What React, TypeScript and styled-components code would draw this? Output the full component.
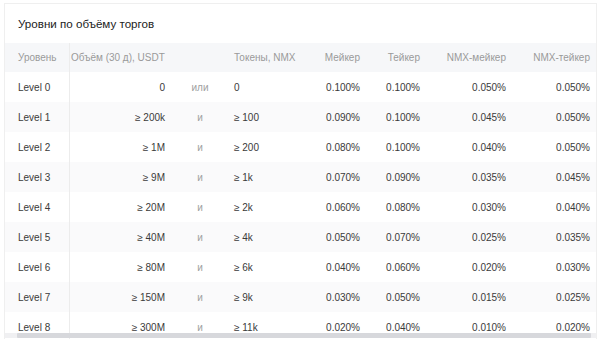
import styled, { createGlobalStyle } from "styled-components";

type Level = {
   name: string;
   volume: string;
   joint: string;
   tokens: string;
   maker: string;
   taker: string;
   nmxMaker: string;
   nmxTaker: string;
};

const levels: Level[] = [
   { name: "Level 0", volume: "0", joint: "или", tokens: "0", maker: "0.100%", taker: "0.100%", nmxMaker: "0.050%", nmxTaker: "0.050%" },
   { name: "Level 1", volume: "≥ 200k", joint: "и", tokens: "≥ 100", maker: "0.090%", taker: "0.100%", nmxMaker: "0.045%", nmxTaker: "0.050%" },
   { name: "Level 2", volume: "≥ 1M", joint: "и", tokens: "≥ 200", maker: "0.080%", taker: "0.100%", nmxMaker: "0.040%", nmxTaker: "0.050%" },
   { name: "Level 3", volume: "≥ 9M", joint: "и", tokens: "≥ 1k", maker: "0.070%", taker: "0.090%", nmxMaker: "0.035%", nmxTaker: "0.045%" },
   { name: "Level 4", volume: "≥ 20M", joint: "и", tokens: "≥ 2k", maker: "0.060%", taker: "0.080%", nmxMaker: "0.030%", nmxTaker: "0.040%" },
   { name: "Level 5", volume: "≥ 40M", joint: "и", tokens: "≥ 4k", maker: "0.050%", taker: "0.070%", nmxMaker: "0.025%", nmxTaker: "0.035%" },
   { name: "Level 6", volume: "≥ 80M", joint: "и", tokens: "≥ 6k", maker: "0.040%", taker: "0.060%", nmxMaker: "0.020%", nmxTaker: "0.030%" },
   { name: "Level 7", volume: "≥ 150M", joint: "и", tokens: "≥ 9k", maker: "0.030%", taker: "0.050%", nmxMaker: "0.015%", nmxTaker: "0.025%" },
   { name: "Level 8", volume: "≥ 300M", joint: "и", tokens: "≥ 11k", maker: "0.020%", taker: "0.040%", nmxMaker: "0.010%", nmxTaker: "0.020%" },
];

function App() {
   return (
      <>
         <GlobalStyle />
         <Card>
            <Title>Уровни по объёму торгов</Title>
            <TableScroll>
               <HeaderRow>
                  <LevelCell>Уровень</LevelCell>
                  <Cell $align="left" $pad="0 0 0 1px">Объём (30 д), USDT</Cell>
                  <Cell $align="center" />
                  <Cell $align="left" $pad="0 0 0 4px">Токены, NMX</Cell>
                  <Cell $align="right">Мейкер</Cell>
                  <Cell $align="right">Тейкер</Cell>
                  <Cell $align="right">NMX-мейкер</Cell>
                  <Cell $align="right" $pad="0 6px 0 0">NMX-тейкер</Cell>
               </HeaderRow>
               {levels.map((level, i) => (
                  <BodyRow key={level.name} $striped={i % 2 === 1}>
                     <LevelCell>{level.name}</LevelCell>
                     <Cell $align="right" $pad="0 5px 0 0">{level.volume}</Cell>
                     <Joint>{level.joint}</Joint>
                     <Cell $align="left" $pad="0 0 0 4px">{level.tokens}</Cell>
                     <Cell $align="right">{level.maker}</Cell>
                     <Cell $align="right">{level.taker}</Cell>
                     <Cell $align="right">{level.nmxMaker}</Cell>
                     <Cell $align="right" $pad="0 6px 0 0">{level.nmxTaker}</Cell>
                  </BodyRow>
               ))}
               <ScrollTrack>
                  <ScrollThumb />
               </ScrollTrack>
            </TableScroll>
         </Card>
      </>
   );
}

const GlobalStyle = createGlobalStyle`
   body {
      margin: 0;
      background: #fff;
      font-family: "Liberation Sans", Arial, sans-serif;
      overflow: hidden;
   }
`;

const Card = styled.div`
   margin: 3px 7px 0 4px;
   border: 1px solid #efefef;
   border-bottom: none;
   background: #fff;
`;

const Title = styled.div`
   height: 39px;
   display: flex;
   align-items: center;
   padding-left: 13px;
   font-size: 11.6px;
   color: #222;
`;

const TableScroll = styled.div`
   position: relative;
   height: 296px;
   overflow: hidden;
`;

const Row = styled.div`
   display: grid;
   grid-template-columns: 65px 100px 60px 70px 64px 60px 86px 86px;
   align-items: stretch;
   font-size: 10px;
`;

const HeaderRow = styled(Row)`
   height: 29px;
   background: #f6f7f9;
   color: #9a9a9a;
`;

const BodyRow = styled(Row)<{ $striped: boolean }>`
   height: 30px;
   background: ${({ $striped }) => ($striped ? "#fafafb" : "#fff")};
   color: #3a3a3a;
`;

const Cell = styled.div<{ $align: "left" | "right" | "center"; $pad?: string }>`
   display: flex;
   align-items: center;
   justify-content: ${({ $align }) =>
      $align === "left" ? "flex-start" : $align === "right" ? "flex-end" : "center"};
   padding: ${({ $pad }) => $pad ?? "0 4px 0 0"};
   white-space: nowrap;
`;

const LevelCell = styled.div`
   display: flex;
   align-items: center;
   padding-left: 13px;
   border-right: 1px solid #ececec;
   white-space: nowrap;
`;

const Joint = styled.div`
   display: flex;
   align-items: center;
   justify-content: center;
   color: #a0a0a0;
`;

const ScrollTrack = styled.div`
   position: absolute;
   left: 0;
   right: 0;
   bottom: 1px;
   height: 5px;
   background: #f0f0f2;
`;

const ScrollThumb = styled.div`
   margin: 0 5px 0 12px;
   height: 100%;
   background: #d7d8dc;
   border-radius: 1px;
`;

export default App;
